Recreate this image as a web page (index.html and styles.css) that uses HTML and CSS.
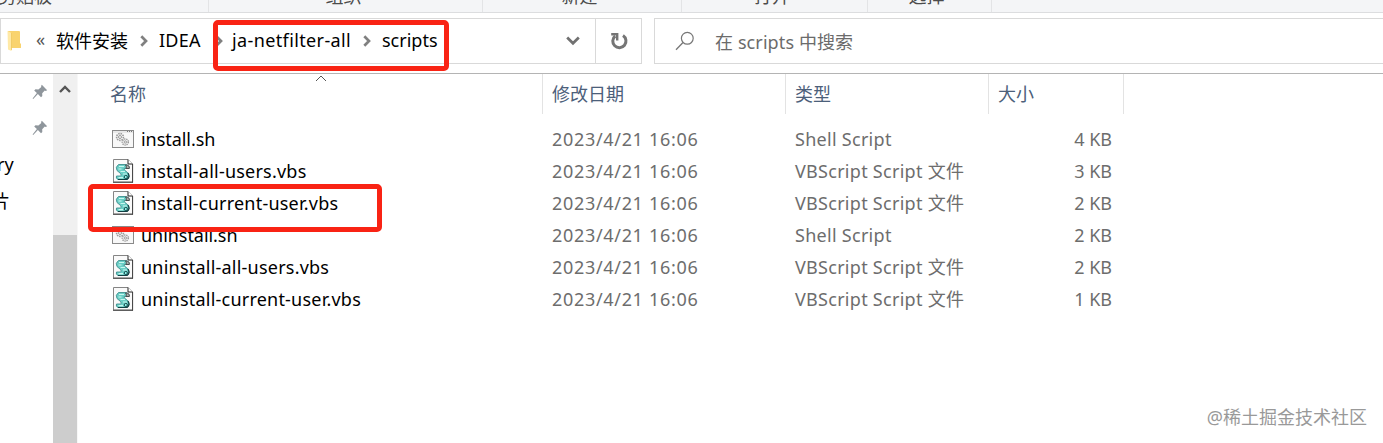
FILE: index.html
```
<!DOCTYPE html>
<html lang="zh-CN">
<head>
    <meta charset="UTF-8" />
    <meta name="viewport" content="width=device-width, initial-scale=1.0" />
    <title>scripts</title>
    <link rel="stylesheet" href="styles.css">
</head>
<body>
    <!-- shared icons -->
    <svg width="0" height="0" class="defs">
        <symbol id="pin" viewBox="0 0 16 16">
            <path d="M9.8 0.8 15.2 6.2 13.6 6.9 12.8 6.6 10.2 9.3 10.3 12 9 13.2 5.9 10.1 1.2 15 0.6 14.6 4.9 9.1 2.2 6.4 3.5 5.3 6.4 5.5 9.3 2.9 9.1 1.9Z" fill="#8f969c"/>
        </symbol>
        <symbol id="shell" viewBox="0 0 22 18">
            <rect x="0.5" y="0.5" width="21" height="17" fill="#f8f8f8" stroke="#8a8a8a"/>
            <path d="M1 2H21" stroke="#d8d8d8"/>
            <path d="M15 1.5h1M17 1.5h1M19 1.5h1" stroke="#777"/>
            <g fill="none" stroke="#9a9a9a">
                <circle cx="8" cy="7" r="3.4" stroke-width="1.6" stroke-dasharray="1.5 .8"/>
                <circle cx="8" cy="7" r="1.5"/>
                <circle cx="13.3" cy="12" r="3" stroke-width="1.5" stroke-dasharray="1.3 .8"/>
                <circle cx="13.3" cy="12" r="1.2"/>
            </g>
        </symbol>
        <symbol id="vbs" viewBox="0 0 22 24">
            <path d="M1.5 0.5H16L20.5 5V23H1.5Z" fill="#fafafa" stroke="#858585"/>
            <path d="M1 23.3H21M20.6 5V23.5" stroke="#444" fill="none"/>
            <path d="M16 0.5V5H20.5" fill="#fff" stroke="#222"/>
            <path d="M6.5 5.5H14.5Q17.5 6.5 17 9.5H13Q11 9.5 12.5 11L16 14Q18.5 18 15 20.5H6Q3.5 19.5 4.5 17H8.5Q10 16.5 8.5 14.5L5 11.5Q3 8 6.5 5.5Z" fill="#6bcfc6" stroke="#3f8f8f" stroke-width=".9"/>
            <path d="M7 7.5H12M6.5 10H9.5M8.5 12.5H13M11 15H15M6.5 18.7H11" stroke="#c9f7f0" stroke-width="1.2"/>
            <path d="M13.5 6Q18 6 17.3 9.5H14Q15 7.5 13.5 6Z" fill="#aaa" stroke="#444" stroke-width=".9"/>
            <path d="M16 14Q18.5 18 15 20.5H6" fill="none" stroke="#123f42" stroke-width="1.2"/>
            <circle cx="13.8" cy="18" r="1.6" fill="#8df0e5" stroke="#164b4e"/>
        </symbol>
        <symbol id="crumb" viewBox="0 0 8 12">
            <path d="M1.3 1.3 6 6 1.3 10.7" fill="none" stroke="#808080" stroke-width="2.7"/>
        </symbol>
    </svg>

    <div class="window">
        <div class="ribbon">
            <div class="group g1"><span>剪贴板</span></div>
            <div class="group g2"><span>组织</span></div>
            <div class="group g3"><span>新建</span></div>
            <div class="group g4"><span>打开</span></div>
            <div class="group g5"><span>选择</span></div>
        </div>

        <div class="toolbar">
            <div class="address">
                <svg class="folder" width="15" height="22" viewBox="0 0 15 22">
                    <path d="M1 1H12Q13 1 13 2V13L14 14V18H2Z" fill="#f9d36e"/>
                    <path d="M0.5 1 4.5 3V21L1 19.5Z" fill="#ffe9a6"/>
                    <path d="M4.5 3V20" stroke="#eec65e" stroke-width=".8"/>
                </svg>
                <span class="more">«</span>
                <span class="crumb c1">软件安装</span>
                <svg class="arrow" width="8" height="12"><use href="#crumb"/></svg>
                <span class="crumb c2">IDEA</span>
                <svg class="arrow" width="8" height="12"><use href="#crumb"/></svg>
                <span class="crumb c3">ja-netfilter-all</span>
                <svg class="arrow" width="8" height="12"><use href="#crumb"/></svg>
                <span class="crumb c4">scripts</span>
                <svg class="down" width="14" height="10" viewBox="0 0 14 10">
                    <path d="M1.2 1.5 7 7.3 12.8 1.5" fill="none" stroke="#717171" stroke-width="2.7"/>
                </svg>
                <div class="mark mark-path"></div>
            </div>
            <div class="refresh">
                <svg width="18" height="18" viewBox="0 0 18 18">
                    <path d="M13 3.6A6.6 6.6 0 1 1 5.2 4" fill="none" stroke="#757575" stroke-width="3"/>
                    <path d="M1.2 1H8.4V8.4H6V3.4H1.2Z" fill="#757575"/>
                </svg>
            </div>
            <div class="search">
                <svg width="20" height="20" viewBox="0 0 20 20">
                    <circle cx="12.3" cy="7.3" r="5.9" fill="none" stroke="#777" stroke-width="1.2"/>
                    <path d="M8 11.5 1 18.7" stroke="#777" stroke-width="1.3"/>
                </svg>
                <span>在 scripts 中搜索</span>
            </div>
        </div>

        <div class="content">
            <div class="sidebar">
                <div class="nav"><svg width="16" height="16"><use href="#pin"/></svg></div>
                <div class="nav"><svg width="16" height="16"><use href="#pin"/></svg></div>
                <div class="nav"><span class="nav-en">ry</span></div>
                <div class="nav"><span class="nav-cn">片</span></div>
            </div>
            <div class="scrollbar">
                <svg width="12" height="8" viewBox="0 0 12 8">
                    <path d="M1 7 6 2 11 7" fill="none" stroke="#555" stroke-width="2.4"/>
                </svg>
                <div class="thumb"></div>
            </div>
            <div class="files">
                <div class="row head">
                    <div class="name">名称
                        <svg class="sort" width="12" height="7" viewBox="0 0 12 7"><path d="M1 6 6 1 11 6" fill="none" stroke="#555"/></svg>
                    </div>
                    <div class="date">修改日期</div>
                    <div class="type">类型</div>
                    <div class="size">大小</div>
                </div>
                <div class="row">
                    <div class="name"><svg width="22" height="18"><use href="#shell"/></svg><span class="sh">install.sh</span></div>
                    <div class="date">2023/4/21 16:06</div>
                    <div class="type">Shell Script</div>
                    <div class="size">4 KB</div>
                </div>
                <div class="row">
                    <div class="name"><svg width="22" height="24"><use href="#vbs"/></svg><span>install-all-users.vbs</span></div>
                    <div class="date">2023/4/21 16:06</div>
                    <div class="type">VBScript Script 文件</div>
                    <div class="size">3 KB</div>
                </div>
                <div class="row">
                    <div class="name"><svg width="22" height="24"><use href="#vbs"/></svg><span>install-current-user.vbs</span>
                        <div class="mark mark-file"></div>
                    </div>
                    <div class="date">2023/4/21 16:06</div>
                    <div class="type">VBScript Script 文件</div>
                    <div class="size">2 KB</div>
                </div>
                <div class="row">
                    <div class="name"><svg width="22" height="18"><use href="#shell"/></svg><span class="sh">uninstall.sh</span></div>
                    <div class="date">2023/4/21 16:06</div>
                    <div class="type">Shell Script</div>
                    <div class="size">2 KB</div>
                </div>
                <div class="row">
                    <div class="name"><svg width="22" height="24"><use href="#vbs"/></svg><span>uninstall-all-users.vbs</span></div>
                    <div class="date">2023/4/21 16:06</div>
                    <div class="type">VBScript Script 文件</div>
                    <div class="size">2 KB</div>
                </div>
                <div class="row">
                    <div class="name"><svg width="22" height="24"><use href="#vbs"/></svg><span>uninstall-current-user.vbs</span></div>
                    <div class="date">2023/4/21 16:06</div>
                    <div class="type">VBScript Script 文件</div>
                    <div class="size">1 KB</div>
                </div>
            </div>
        </div>
        <div class="watermark">@稀土掘金技术社区</div>
    </div>
</body>
</html>
```
FILE: styles.css
```
* {
    margin: 0;
    padding: 0;
    box-sizing: border-box;
}

body {
    font-family: "Noto Sans", "Noto Sans CJK SC", sans-serif;
    font-size: 18px;
    font-weight: 400;
    color: #000;
    background: #fff;
    overflow: hidden;
}

svg {
    display: block;
    flex: none;
}

.defs {
    position: absolute;
}

.window {
    position: relative;
    display: flex;
    flex-direction: column;
    width: 100%;
    height: 443px;
    overflow: hidden;
    white-space: nowrap;
}

/* ribbon */
.ribbon {
    display: flex;
    height: 13px;
    background: #f4f5f7;
    border-bottom: 1px solid #dcdddf;
    overflow: hidden;
}

.group {
    display: flex;
    align-items: flex-end;
    justify-content: center;
    height: 12px;
    padding-bottom: 6px;
    border-right: 1px solid #e3e4e6;
    color: #4b4b4b;
    line-height: 20px;
}

.g1 {
    width: 209px;
    justify-content: flex-start;
}

.g1 span {
    margin-left: -2px;
}

.g2 {
    width: 274px;
    padding-right: 4px;
}

.g3 {
    width: 199px;
    padding-right: 5px;
}

.g4 {
    width: 186px;
    padding-right: 5px;
}

.g5 {
    width: 124px;
    padding-right: 6px;
}

/* address bar */
.toolbar {
    display: flex;
    height: 61px;
    padding-top: 5px;
    border-bottom: 1px solid #b4b4b4;
}

.address {
    position: relative;
    display: flex;
    align-items: center;
    width: 596px;
    height: 46px;
    padding-left: 6px;
    border: 1px solid #d9d9d9;
}

.more {
    width: 20px;
    margin-left: 14px;
    padding-bottom: 4px;
    color: #555;
}

.crumb {
    flex: none;
    padding-bottom: 2px;
}

.c1 {
    width: 84px;
}

.c2 {
    width: 56px;
    margin-left: 11px;
    letter-spacing: 0.25px;
}

.c3 {
    width: 131px;
    margin-left: 9px;
    letter-spacing: 0.38px;
}

.c4 {
    width: 57px;
    margin-left: 11px;
}

.down {
    margin-left: auto;
    margin-right: 15px;
}

.refresh {
    display: flex;
    align-items: center;
    justify-content: center;
    width: 46px;
    height: 46px;
    border: 1px solid #d9d9d9;
    border-left: none;
}

.search {
    display: flex;
    flex: 1;
    align-items: center;
    height: 46px;
    margin-left: 12px;
    padding-left: 20px;
    border: 1px solid #d9d9d9;
    border-right: none;
    color: #6b6b6b;
}

.search span {
    margin-left: 20px;
    padding-bottom: 1px;
    letter-spacing: 0.1px;
}

/* red highlight boxes */
.mark {
    position: absolute;
    border: 5px solid #f92314;
    border-radius: 5px;
}

.mark-path {
    left: 212px;
    top: 1px;
    width: 236px;
    height: 51px;
}

.mark-file {
    left: 10px;
    top: -3px;
    width: 294px;
    height: 48px;
    z-index: 1;
}

/* content */
.content {
    display: flex;
    flex: 1;
}

.sidebar {
    width: 53px;
}

.nav {
    display: flex;
    align-items: center;
    height: 36px;
}

.nav svg {
    margin-left: 32px;
}

.nav-en {
    margin-left: -3px;
}

.nav-cn {
    margin-left: -8px;
}

.scrollbar {
    display: flex;
    flex-direction: column;
    align-items: center;
    width: 25px;
    padding-top: 11px;
    background: #f0f0f0;
    border-right: 1px solid #f7f7f7;
}

.thumb {
    flex: 1;
    width: 24px;
    margin-top: 142px;
    background: #cdcdcd;
}

.files {
    flex: 1;
}

.row {
    display: flex;
    height: 32px;
    line-height: 32px;
    color: #6d6d6d;
}

.name {
    position: relative;
    display: flex;
    align-items: center;
    width: 465px;
    padding-left: 34px;
    color: #000;
}

.name span {
    margin-left: 7px;
    letter-spacing: 0.22px;
}

.name .sh {
    letter-spacing: -0.05px;
}

.date {
    width: 243px;
    padding-left: 9px;
    letter-spacing: 0.68px;
}

.type {
    width: 203px;
    padding-left: 9px;
    letter-spacing: 0.28px;
}

.size {
    width: 135px;
    padding-right: 12px;
    text-align: right;
}

.head {
    height: 40px;
    margin-bottom: 9px;
    line-height: 41px;
}

.head div {
    border-right: 1px solid #e3e3e3;
    color: #4c607a;
    letter-spacing: 0;
}

.head .name {
    padding-left: 32px;
}

.head .size {
    padding-left: 9px;
    text-align: left;
}

.sort {
    position: absolute;
    left: 237px;
    top: 1px;
}

.watermark {
    position: absolute;
    right: 16px;
    bottom: 12px;
    color: #999;
    line-height: 28px;
}
```
